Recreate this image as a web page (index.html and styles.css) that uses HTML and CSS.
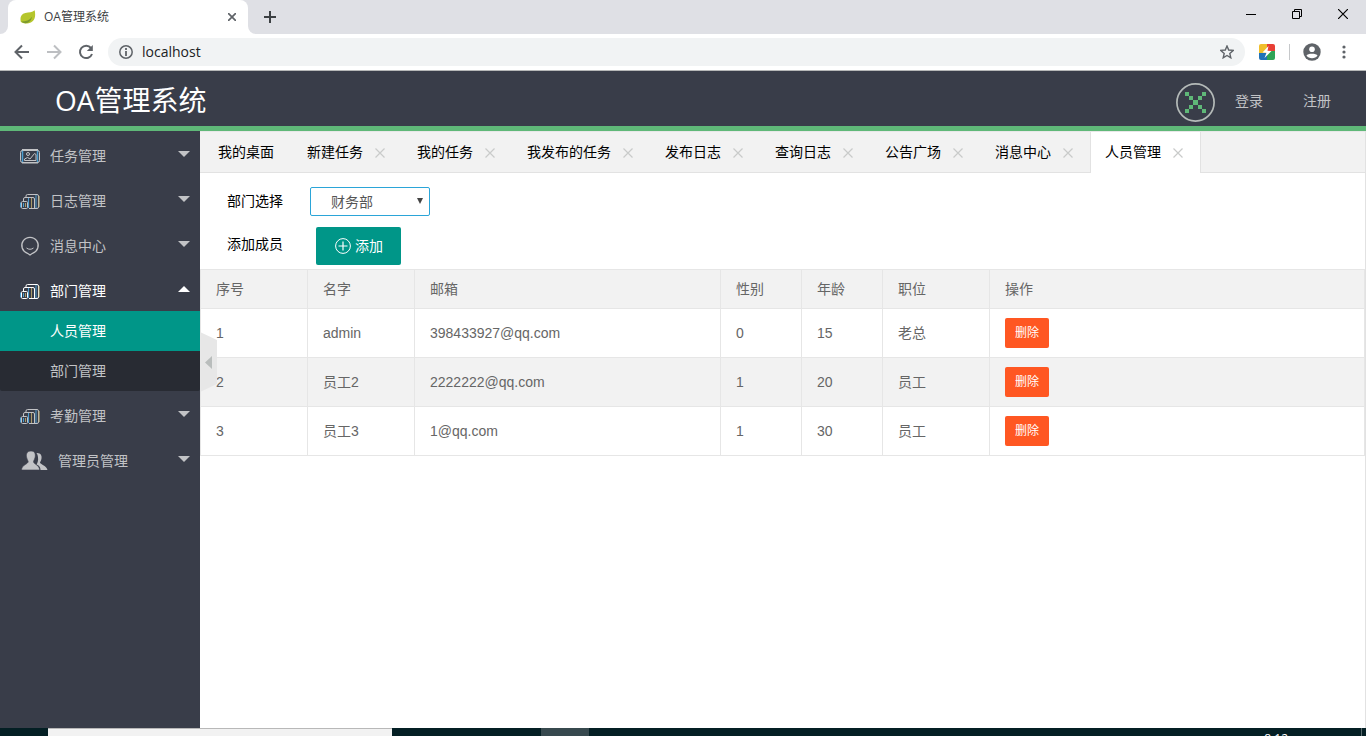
FILE: index.html
```html
<!DOCTYPE html>
<html lang="zh-CN">
<head>
<meta charset="utf-8">
<title>OA管理系统</title>
<link rel="stylesheet" href="styles.css">
</head>
<body>
<svg class="sprite" aria-hidden="true">
  <symbol id="cards" viewBox="0 0 20 20">
    <g fill="none" stroke="currentColor"><path d="M9 17.500h8a1.500 1.500 0 0 0 1.500-1.500V5A1.500 1.500 0 0 0 17 3.500H7.500A1.500 1.500 0 0 0 6 5v1"/><path d="M14.500 17V8A1.500 1.500 0 0 0 13 6.500H5A1.500 1.500 0 0 0 3.500 8v2"/><rect x="1.500" y="10.500" width="6" height="7" rx="1"/></g>
    <path d="M.5 11.500v5M3.500 12v4M8.500 7v10M16 4v13" stroke="#4c9ed0"/>
    <path d="M5.500 12v4M11.500 7v10M19.200 5v11" stroke="#a99a68"/>
  </symbol>
  <symbol id="close" viewBox="0 0 10 10"><path d="M.5.5l9 9M9.500.5l-9 9" fill="none" stroke="currentColor" stroke-width="1.200"/></symbol>
</svg>
<div class="window">
  <div class="titlebar">
    <div class="corner"></div>
    <div class="page-tab">
      <svg class="leaf" viewBox="0 0 18 16"><path d="M16.500.5c1 5 .8 9-2 12C11.500 15.800 6 16 1 13.500-.3 9 1 4.500 6 3.500c4-.8 8-.5 10.500-3z" fill="#b5c62c"/><path d="M1.500 13.200c5-.2 9.500-1.700 12-5.500-.6 4.300-3.300 7-7.500 7.300-1.800 0-3.300-.6-4.500-1.800z" fill="#7d9a2e"/></svg>
      <span class="page-title">OA管理系统</span>
      <button class="plain" aria-label="关闭标签"><svg width="8" height="8" viewBox="0 0 8 8"><path d="M0 0l8 8M8 0L0 8" stroke="#5f6368" stroke-width="1.700"/></svg></button>
    </div>
    <button class="plain new-tab" aria-label="新标签"><svg width="12" height="12" viewBox="0 0 12 12"><path d="M6 0v12M0 6h12" stroke="#3c4043" stroke-width="2"/></svg></button>
    <div class="window-buttons">
      <button class="plain" aria-label="最小化"><svg width="10" height="10"><path d="M0 5.500h10" stroke="#000"/></svg></button>
      <button class="plain" aria-label="还原"><svg width="10" height="10"><path d="M.5 2.500h7v7h-7zM2.500 2.500v-2h7v7h-2" fill="none" stroke="#000"/></svg></button>
      <button class="plain" aria-label="关闭"><svg width="10" height="10"><path d="M0 0l10 10M10 0L0 10" stroke="#000" stroke-width="1.200"/></svg></button>
    </div>
  </div>
  <div class="toolbar">
    <button class="plain" aria-label="后退"><svg width="16" height="16" viewBox="0 0 16 16"><path d="M15 8H2M8 1.500L1.500 8 8 14.500" fill="none" stroke="#5f6368" stroke-width="2"/></svg></button>
    <button class="plain" aria-label="前进"><svg width="16" height="16" viewBox="0 0 16 16"><path d="M1 8h13M8 1.500L14.500 8 8 14.500" fill="none" stroke="#bdbfc2" stroke-width="2"/></svg></button>
    <button class="plain" aria-label="刷新"><svg width="16" height="16" viewBox="0 0 16 16"><path d="M13 4A6.200 6.200 0 1 0 14 10" fill="none" stroke="#5f6368" stroke-width="2"/><path d="M14.800 1v6h-6z" fill="#5f6368"/></svg></button>
    <div class="address">
      <svg width="14" height="14" viewBox="0 0 14 14"><circle cx="7" cy="7" r="6.200" fill="none" stroke="#5f6368" stroke-width="1.500"/><path d="M7 6v5M7 3v2" stroke="#5f6368" stroke-width="1.800"/></svg>
      <input type="text" value="localhost" aria-label="地址">
      <svg width="14" height="14" viewBox="0 0 14 14"><path d="M7 1l1.700 4 4.500.4-3.400 3 1 4.400L7 10.500l-3.800 2.300 1-4.400-3.400-3 4.500-.4z" fill="none" stroke="#5f6368" stroke-width="1.400"/></svg>
    </div>
    <svg class="extension" width="16" height="16" viewBox="0 0 16 16"><defs><clipPath id="r"><rect width="16" height="16" rx="2"/></clipPath></defs><g clip-path="url(#r)"><path fill="#f0bf2c" d="M0 0h8v9H0z"/><path fill="#e83f35" d="M8 0h8v7H8z"/><path fill="#2072b8" d="M0 9h8v7H0z"/><path fill="#2fa457" d="M8 7h8v9H8z"/></g><path d="M9.500 2L3.500 8.500l4 .3L5.500 14l7-7-4-.3z" fill="#fff"/></svg>
    <span class="divider"></span>
    <svg class="profile" width="18" height="18" viewBox="0 0 18 18"><circle cx="9" cy="9" r="8.700" fill="#5f6368"/><circle cx="9" cy="6.200" r="2.800" fill="#fff"/><path d="M3.500 12.500c1-2.500 10-2.500 11 0-2.200 3.600-8.800 3.600-11 0z" fill="#fff"/></svg>
    <svg class="menu-dots" width="4" height="14" viewBox="0 0 4 14"><g fill="#5f6368"><circle cx="2" cy="2" r="1.600"/><circle cx="2" cy="7" r="1.600"/><circle cx="2" cy="12" r="1.600"/></g></svg>
  </div>

  <header class="header">
    <h1 class="brand">OA管理系统</h1>
    <nav class="account">
      <svg width="39" height="39" viewBox="0 0 39 39"><circle cx="19.500" cy="19.500" r="18.600" fill="none" stroke="#b4bab8" stroke-width="1.700"/><path fill="#5fb878" d="M9 9h4v4H9zM26 9h4v4h-4zM13 13h4v4h-4zM22 13h4v4h-4zM17 17h5v5h-5zM13 22h4v4h-4zM22 22h4v4h-4zM9 26h4v4H9zM26 26h4v4h-4z"/></svg>
      <a href="#">登录</a>
      <a href="#">注册</a>
    </nav>
  </header>

  <div class="body">
    <aside class="side">
      <ul>
        <li><a class="item" href="#"><svg class="icon" viewBox="0 0 20 20"><path d="M2.500 4v13M17.500 4v13" stroke="#4c9ed0" stroke-width="1.500"/><rect x=".5" y="4.500" width="19" height="12" rx="2" fill="none" stroke="currentColor"/><path d="M2 3.500h16M2 17h16" stroke="currentColor"/><circle cx="8" cy="8" r="1.500" fill="none" stroke="currentColor"/><path d="M4.500 14.500v-1.500l3-1.500 2.500 1.500 4.500-5.500 1.500 1v6z" fill="none" stroke="currentColor"/></svg>任务管理<span class="arrow"></span></a></li>
        <li><a class="item" href="#"><svg class="icon"><use href="#cards"/></svg>日志管理<span class="arrow"></span></a></li>
        <li><a class="item" href="#"><svg class="icon" viewBox="0 0 20 20"><path d="M7.500 17.300a8.200 8.200 0 1 1 5 0L10 19z" fill="none" stroke="currentColor" stroke-width="1.300"/><path d="M6.500 12c2 1.700 5 1.700 7 0" fill="none" stroke="currentColor"/></svg>消息中心<span class="arrow"></span></a></li>
        <li>
          <a class="item open" href="#"><svg class="icon"><use href="#cards"/></svg>部门管理<span class="arrow up"></span></a>
          <ul class="sub">
            <li><a class="current" href="#">人员管理</a></li>
            <li><a href="#">部门管理</a></li>
          </ul>
        </li>
        <li><a class="item" href="#"><svg class="icon"><use href="#cards"/></svg>考勤管理<span class="arrow"></span></a></li>
        <li><a class="item" href="#"><svg class="icon people" viewBox="0 0 28 20"><path d="M17 2c4 0 5 3 4.500 5.500-.2 2-1.200 3-1.500 4 .3 2 6 2.500 7.500 7.500h-7c0-3-1.500-4.500-4-5.500 1-1.500 2-4.500 1.500-7-.2-2-.6-3.500-1.500-4z" fill="currentColor"/><path d="M11 0c4 0 4.600 3 4.200 6-.3 2-1.300 3-1.700 4.500 0 3 5.700 3 6.200 8.500H1.500c.3-5.500 6.500-5.500 6.700-8.500C7.800 9 6.800 8 6.500 6 6 3 7 0 11 0z" fill="currentColor" stroke="#393d49" stroke-width=".6"/></svg>管理员管理<span class="arrow"></span></a></li>
      </ul>
      <button class="plain handle" aria-label="收起菜单"><svg width="17" height="60" viewBox="0 0 17 60"><path d="M0 0l17 8v44L0 60z" fill="#e7e7e7"/><path d="M12 24v13l-7-6.500z" fill="#b9bdbc"/></svg></button>
    </aside>

    <main class="content">
      <ul class="tabs">
        <li class="home"><a href="#">我的桌面</a></li>
        <li><a href="#">新建任务</a><button class="plain" aria-label="关闭"><svg><use href="#close"/></svg></button></li>
        <li><a href="#">我的任务</a><button class="plain" aria-label="关闭"><svg><use href="#close"/></svg></button></li>
        <li><a href="#">我发布的任务</a><button class="plain" aria-label="关闭"><svg><use href="#close"/></svg></button></li>
        <li><a href="#">发布日志</a><button class="plain" aria-label="关闭"><svg><use href="#close"/></svg></button></li>
        <li><a href="#">查询日志</a><button class="plain" aria-label="关闭"><svg><use href="#close"/></svg></button></li>
        <li><a href="#">公告广场</a><button class="plain" aria-label="关闭"><svg><use href="#close"/></svg></button></li>
        <li><a href="#">消息中心</a><button class="plain" aria-label="关闭"><svg><use href="#close"/></svg></button></li>
        <li class="active"><a href="#">人员管理</a><button class="plain" aria-label="关闭"><svg><use href="#close"/></svg></button></li>
      </ul>
      <form class="filters">
        <div class="field">
          <label for="dept">部门选择</label>
          <span class="picker"><select id="dept"><option>财务部</option></select><span class="caret"></span></span>
        </div>
        <div class="field">
          <label for="add">添加成员</label>
          <button id="add" class="add" type="button"><svg width="16" height="16" viewBox="0 0 16 16"><circle cx="8" cy="8" r="7.400" fill="none" stroke="#fff"/><path d="M8 3.500v9M3.500 8h9" stroke="#fff" stroke-width="1.200"/></svg>添加</button>
        </div>
      </form>
      <table class="staff">
        <colgroup><col class="mid"><col class="mid"><col class="wide"><col class="small"><col class="small"><col class="mid"><col></colgroup>
        <thead><tr><th>序号</th><th>名字</th><th>邮箱</th><th>性别</th><th>年龄</th><th>职位</th><th>操作</th></tr></thead>
        <tbody>
          <tr><td>1</td><td>admin</td><td>398433927@qq.com</td><td>0</td><td>15</td><td>老总</td><td><button class="remove">删除</button></td></tr>
          <tr><td>2</td><td>员工2</td><td>2222222@qq.com</td><td>1</td><td>20</td><td>员工</td><td><button class="remove">删除</button></td></tr>
          <tr><td>3</td><td>员工3</td><td>1@qq.com</td><td>1</td><td>30</td><td>员工</td><td><button class="remove">删除</button></td></tr>
        </tbody>
      </table>
    </main>
  </div>

  <footer class="taskbar">
    <div class="search"></div>
    <div class="running"></div>
    <span class="clock">8:12</span>
    <span class="show-desktop"></span>
  </footer>
</div>
</body>
</html>
```
FILE: styles.css
```css
* { box-sizing: border-box; }
body { margin: 0; font: 14px/24px "Liberation Sans", "Noto Sans CJK SC", sans-serif; color: #000; }
ul { list-style: none; margin: 0; padding: 0; }
a { color: inherit; text-decoration: none; }
button, select, input { font: inherit; }
svg { display: block; flex: none; }
.sprite { position: absolute; width: 0; height: 0; }
.plain { display: flex; align-items: center; justify-content: center; padding: 0; border: 0; background: none; }
.window { display: flex; flex-direction: column; height: 100vh; overflow: hidden; }

.titlebar { display: flex; flex: none; height: 34px; background: linear-gradient(#dfe0e5 26px, #fff 26px); }
.corner { width: 8px; background: #dfe0e5; border-bottom-right-radius: 8px; }
.page-tab { display: flex; align-items: center; width: 240px; padding: 0 12px; background: #fff; border-radius: 8px 8px 0 0; }
.leaf { width: 16px; height: 16px; margin-right: 8px; }
.page-title { flex: 1; font: 12px/16px "Open Sans", "Noto Sans CJK SC", sans-serif; color: #3c4043; }
.new-tab { width: 44px; background: #dfe0e5; border-bottom-left-radius: 8px; }
.window-buttons { display: flex; flex: 1; justify-content: flex-end; background: #dfe0e5; }
.window-buttons button { width: 46px; height: 28px; }

.toolbar { display: flex; flex: none; align-items: center; height: 37px; padding: 0 20px 0 14px; border-bottom: 1px solid #b6b8b8; background: #fff; }
.toolbar button { width: 16px; margin-right: 16px; }
.address { display: flex; flex: 1; align-items: center; height: 28px; padding: 0 11px; margin-left: -2px; border-radius: 14px; background: #f1f3f4; }
.address input { flex: 1; min-width: 0; padding: 0 9px; border: 0; background: none; font: 14px/20px "Open Sans", sans-serif; color: #202124; }
.extension { margin-left: 14px; }
.divider { width: 1px; height: 16px; margin: 0 13px 0 14px; background: #c6c8ca; }
.menu-dots { margin-left: 21px; }

.header { display: flex; flex: none; align-items: center; justify-content: space-between; height: 60px; padding: 4px 15px 0 55px; border-bottom: 5px solid #5fb878; background: #393d49; }
.brand { margin: 0; padding-bottom: 2px; font: 400 28px/40px "Open Sans", "Noto Sans CJK SC", sans-serif; color: #fff; }
.account { display: flex; align-items: flex-start; padding-top: 4px; line-height: 36px; color: #c2c3c6; }
.account a { padding: 0 20px; }

.body { display: flex; flex: 1; min-height: 0; }
.side { position: relative; flex: none; width: 200px; background: #393d49; color: #c2c3c6; }
.item { display: flex; align-items: center; height: 45px; padding: 4px 10px 0 20px; }
.icon { width: 20px; height: 20px; margin-right: 10px; }
.people { width: 28px; }
.open, .current { color: #fff; }
.arrow { margin-left: auto; margin-bottom: 4px; border: 6px solid transparent; border-bottom-width: 0; border-top-color: currentColor; }
.arrow.up { border-width: 0 6px 6px; border-bottom-color: currentColor; }
.sub { border-radius: 2px; background: #282b33; }
.sub a { display: block; height: 40px; padding-left: 50px; line-height: 40px; }
.sub .current { background: #009688; }
.handle { position: absolute; left: 100%; top: 201px; z-index: 1; }

.content { flex: 1; min-width: 0; border-right: 1px solid #e2e2e2; background: #fff; }
.tabs { display: flex; height: 42px; padding-left: 3px; border-top: 1px solid #e8e8e8; border-bottom: 1px solid #e2e2e2; background: #f2f2f2; line-height: 40px; }
.tabs li { display: flex; height: 41px; padding: 0 14px 0 15px; }
.tabs .home { margin-right: 4px; }
.tabs .active { padding: 0 14px; border: 1px solid #e2e2e2; border-width: 0 1px; background: #fff; }
.tabs button { width: 16px; height: 41px; margin-left: 9px; color: #c9cbca; }
.tabs button svg { width: 10px; height: 10px; }
.filters { padding: 14px 0 4px 27px; }
.field { display: flex; align-items: flex-start; }
.field + .field { margin-top: 11px; }
.field label { width: 83px; line-height: 28px; }
.field + .field label { line-height: 34px; }
.picker { position: relative; }
.picker select { display: block; width: 120px; height: 29px; padding: 0 20px; border: 1px solid #2ba5d8; border-radius: 2px; appearance: none; background: #fff; color: #555; }
.caret { position: absolute; right: 7px; top: 11px; border: 3px solid transparent; border-top: 6px solid #444; border-bottom: 0; }
.add { display: flex; align-items: center; gap: 4px; height: 38px; margin-left: 6px; padding: 0 18px 0 19px; border: 0; border-radius: 2px; background: #009688; color: #fff; }

.staff { width: 100%; table-layout: fixed; border-collapse: collapse; color: #666; }
.mid { width: 107px; }
.wide { width: 306px; }
.small { width: 81px; }
.staff th, .staff td { padding: 0 15px; border: 1px solid #e6e6e6; font-weight: 400; text-align: left; }
.staff th { height: 39px; background: #f2f2f2; }
.staff td { height: 49px; }
.staff tbody tr:nth-child(even) { background: #f2f2f2; }
.remove { display: block; height: 30px; padding: 0 10px; border: 0; border-radius: 2px; background: #ff5722; color: #fff; font-size: 12px; }

.taskbar { display: flex; flex: none; height: 8px; padding-left: 48px; overflow: hidden; background: #041f24; }
.search { width: 344px; border-top: 1px solid #b8b8b8; background: #f2f2f2; }
.running { width: 48px; margin-left: 149px; background: #37494e; }
.clock { margin-left: auto; padding-top: 3px; margin-right: 73px; font: 12px/16px "Open Sans", sans-serif; color: #fff; }
.show-desktop { width: 5px; border-left: 1px solid #5a6b6e; }
```
